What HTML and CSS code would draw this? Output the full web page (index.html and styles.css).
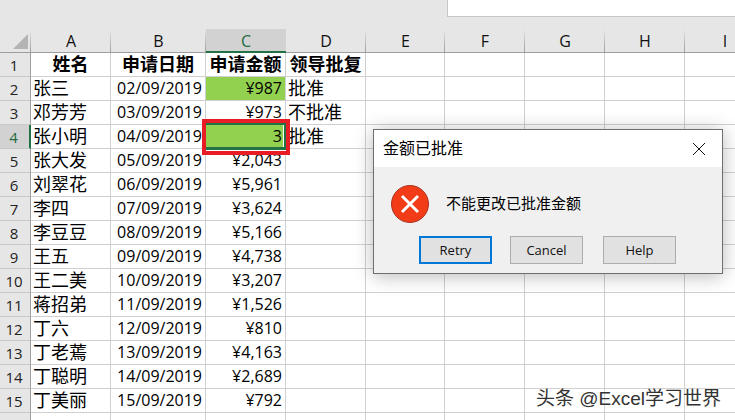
FILE: index.html
```html
<!DOCTYPE html>
<html lang="zh">
<head>
<meta charset="utf-8">
<title>金额已批准</title>
<link rel="stylesheet" href="styles.css">
</head>
<body>
<div class="app">
  <div class="topbar"><div class="formula"></div></div>
  <div class="sheet">
    <div class="h corner"><span class="tri"></span></div><div class="h">A</div><div class="h">B</div><div class="h on">C</div><div class="h">D</div><div class="h">E</div><div class="h">F</div><div class="h">G</div><div class="h">H</div><div class="h">I</div>
    <div class="r">1</div><div class="c hd">姓名</div><div class="c hd">申请日期</div><div class="c hd">申请金额</div><div class="c hd">领导批复</div><div class="c"></div><div class="c"></div><div class="c"></div><div class="c"></div><div class="c"></div>
    <div class="r">2</div><div class="c">张三</div><div class="c n">02/09/2019</div><div class="c n g">¥987</div><div class="c">批准</div><div class="c"></div><div class="c"></div><div class="c"></div><div class="c"></div><div class="c"></div>
    <div class="r">3</div><div class="c">邓芳芳</div><div class="c n">03/09/2019</div><div class="c n">¥973</div><div class="c">不批准</div><div class="c"></div><div class="c"></div><div class="c"></div><div class="c"></div><div class="c"></div>
    <div class="r cur">4</div><div class="c">张小明</div><div class="c n">04/09/2019</div><div class="c n g">3</div><div class="c">批准</div><div class="c"></div><div class="c"></div><div class="c"></div><div class="c"></div><div class="c"></div>
    <div class="r">5</div><div class="c">张大发</div><div class="c n">05/09/2019</div><div class="c n">¥2,043</div><div class="c"></div><div class="c"></div><div class="c"></div><div class="c"></div><div class="c"></div><div class="c"></div>
    <div class="r">6</div><div class="c">刘翠花</div><div class="c n">06/09/2019</div><div class="c n">¥5,961</div><div class="c"></div><div class="c"></div><div class="c"></div><div class="c"></div><div class="c"></div><div class="c"></div>
    <div class="r">7</div><div class="c">李四</div><div class="c n">07/09/2019</div><div class="c n">¥3,624</div><div class="c"></div><div class="c"></div><div class="c"></div><div class="c"></div><div class="c"></div><div class="c"></div>
    <div class="r">8</div><div class="c">李豆豆</div><div class="c n">08/09/2019</div><div class="c n">¥5,166</div><div class="c"></div><div class="c"></div><div class="c"></div><div class="c"></div><div class="c"></div><div class="c"></div>
    <div class="r">9</div><div class="c">王五</div><div class="c n">09/09/2019</div><div class="c n">¥4,738</div><div class="c"></div><div class="c"></div><div class="c"></div><div class="c"></div><div class="c"></div><div class="c"></div>
    <div class="r">10</div><div class="c">王二美</div><div class="c n">10/09/2019</div><div class="c n">¥3,207</div><div class="c"></div><div class="c"></div><div class="c"></div><div class="c"></div><div class="c"></div><div class="c"></div>
    <div class="r">11</div><div class="c">蒋招弟</div><div class="c n">11/09/2019</div><div class="c n">¥1,526</div><div class="c"></div><div class="c"></div><div class="c"></div><div class="c"></div><div class="c"></div><div class="c"></div>
    <div class="r">12</div><div class="c">丁六</div><div class="c n">12/09/2019</div><div class="c n">¥810</div><div class="c"></div><div class="c"></div><div class="c"></div><div class="c"></div><div class="c"></div><div class="c"></div>
    <div class="r">13</div><div class="c">丁老蔫</div><div class="c n">13/09/2019</div><div class="c n">¥4,163</div><div class="c"></div><div class="c"></div><div class="c"></div><div class="c"></div><div class="c"></div><div class="c"></div>
    <div class="r">14</div><div class="c">丁聪明</div><div class="c n">14/09/2019</div><div class="c n">¥2,689</div><div class="c"></div><div class="c"></div><div class="c"></div><div class="c"></div><div class="c"></div><div class="c"></div>
    <div class="r">15</div><div class="c">丁美丽</div><div class="c n">15/09/2019</div><div class="c n">¥792</div><div class="c"></div><div class="c"></div><div class="c"></div><div class="c"></div><div class="c"></div><div class="c"></div>
    <div class="r">16</div><div class="c"></div><div class="c"></div><div class="c"></div><div class="c"></div><div class="c"></div><div class="c"></div><div class="c"></div><div class="c"></div><div class="c"></div>
  </div>
  <div class="mark"><div class="frame"></div></div>
  <div class="dialog">
    <div class="dtitle"><span>金额已批准</span>
      <svg class="close" width="14" height="14" viewBox="0 0 14 14"><path d="M1 1L13 13M13 1L1 13" stroke="#111" stroke-width="1" fill="none"/></svg>
    </div>
    <div class="dbody">
      <div class="msg">
        <svg width="38" height="38" viewBox="0 0 38 38"><circle cx="19" cy="19" r="18.5" fill="#f23b17" stroke="#a8341e" stroke-width="1"/><path d="M11 11L27 27M27 11L11 27" stroke="#fff" stroke-width="3" fill="none"/></svg>
        <span>不能更改已批准金额</span>
      </div>
      <div class="btns">
        <div class="btn def">Retry</div>
        <div class="btn">Cancel</div>
        <div class="btn">Help</div>
      </div>
    </div>
  </div>
  <div class="wm">头条 @Excel学习世界</div>
</div>
</body>
</html>
```
FILE: styles.css
```css
html, body { margin: 0; padding: 0; }
body { width: 735px; height: 420px; overflow: hidden; background: #fff; font-family: "Open Sans", "Noto Sans CJK SC", sans-serif; color: #000; }
.app { position: relative; width: 735px; height: 420px; overflow: hidden; }
.topbar { height: 29px; background: #e6e6e6; display: flex; justify-content: flex-end; align-items: flex-start; }
.formula { width: 288px; height: 17px; background: #fff; border-left: 1px solid #c6c6c6; border-bottom: 1px solid #c6c6c6; box-sizing: border-box; }
.sheet { display: grid; grid-template-columns: 31px 80px 95px 80px 80px 79px 80px 80px 80px 80px; grid-auto-rows: 24px; }
.h { background: linear-gradient(#e6e6e6, #9c9c9c) right top / 1px 100% no-repeat, #e6e6e6; border-bottom: 1px solid #9e9e9e; box-sizing: border-box; display: flex; align-items: center; justify-content: center; font-size: 16px; line-height: 23px; padding-top: 1px; color: #111; }
.corner { align-items: flex-end; justify-content: flex-end; padding: 0; }
.tri { width: 0; height: 0; border-left: 15px solid transparent; border-bottom: 15px solid #b4b4b4; margin: 0 3px 3px 0; }
.h.on { background: #d2d2d2; color: #1d6b41; border-bottom: 1px solid #217346; box-shadow: inset 0 -1px 0 #217346; }
.r { background: #e6e6e6; border-right: 1px solid #9e9e9e; border-bottom: 1px solid #c8c8c8; box-sizing: border-box; display: flex; align-items: center; justify-content: center; font-size: 15px; padding-right: 2px; color: #222; }
.r.cur { background: #d2d2d2; color: #1d6b41; border-right: 2px solid #217346; }
.c { border-right: 1px solid #d0d0d0; border-bottom: 1px solid #d0d0d0; box-sizing: border-box; display: flex; align-items: center; font-size: 18px; line-height: 23px; padding: 0 2px; white-space: nowrap; min-width: 0; }
.n { justify-content: flex-end; font-size: 16px; padding-right: 3px; }
.hd { justify-content: center; font-weight: 700; padding: 0; }
.g { background: #92d050; }
.mark { position: absolute; left: 202px; top: 119px; width: 88px; height: 36px; border: 4px solid #e81c24; box-sizing: border-box; }
.frame { height: 100%; box-shadow: inset 0 2px 0 #217346, inset 0 -1px 0 #fff, inset 0 -4px 0 #217346, inset -2px 0 0 #217346, inset -3px 0 0 #fff; }
.dialog { position: absolute; left: 373px; top: 129px; width: 350px; height: 145px; box-sizing: border-box; border: 1px solid #6e6e6e; background: #f0f0f0; box-shadow: 0 2px 18px rgba(0,0,0,.28); display: flex; flex-direction: column; }
.dtitle { height: 37px; background: #fff; display: flex; align-items: center; justify-content: space-between; padding: 0 16px 0 9px; font-size: 16px; flex: none; }
.dtitle span { margin-bottom: 3px; }
.close { display: block; }
.dbody { flex: 1; display: flex; flex-direction: column; padding: 18px 46px 0 17px; }
.msg { display: flex; align-items: center; gap: 17px; font-size: 15px; height: 38px; }
.msg span { margin-bottom: 3px; }
.btns { display: flex; justify-content: flex-end; gap: 18px; margin-top: 13px; }
.btns .btn:last-child { margin-left: 2px; }
.btn { width: 73px; height: 28px; box-sizing: border-box; border: 1px solid #adadad; background: #e1e1e1; display: flex; align-items: center; justify-content: center; font-size: 13px; color: #111; }
.btn.def { border: 2px solid #0078d7; }
.wm { position: absolute; left: 536px; top: 386px; font-family: "Liberation Sans", "Noto Sans CJK SC", sans-serif; font-size: 19px; line-height: 26px; color: #333; white-space: nowrap; text-shadow: 0 0 3px #fff; }
```
